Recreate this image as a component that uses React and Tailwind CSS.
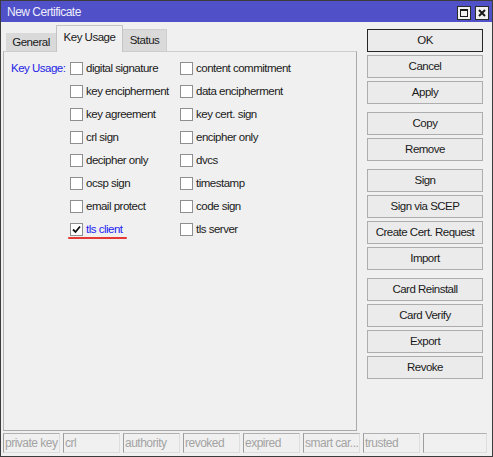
import React from 'react'

const col1 = ['digital signature', 'key encipherment', 'key agreement', 'crl sign', 'decipher only', 'ocsp sign', 'email protect', 'tls client']
const col2 = ['content commitment', 'data encipherment', 'key cert. sign', 'encipher only', 'dvcs', 'timestamp', 'code sign', 'tls server']

const groups = [
  ['OK', 'Cancel', 'Apply'],
  ['Copy', 'Remove'],
  ['Sign', 'Sign via SCEP', 'Create Cert. Request', 'Import'],
  ['Card Reinstall', 'Card Verify', 'Export', 'Revoke'],
]

const status = [
  ['private key', 'w-[57px]'],
  ['crl', 'w-[57px]'],
  ['authority', 'w-[57px]'],
  ['revoked', 'w-[57px]'],
  ['expired', 'w-[57px]'],
  ['smart car...', 'w-[57px]'],
  ['trusted', 'w-[57px]'],
  ['', 'w-[64px]'],
]

const CheckBox = ({ label, checked }) => (
  <div className="h-[23px] flex items-center relative">
    <span className="w-[13px] h-[13px] bg-white border border-[#8f8f8f] flex items-center justify-center shrink-0">
      {checked && (
        <svg width="9" height="9" viewBox="0 0 9 9">
          <path d="M1 4.5 L3.5 7 L8 1.5" fill="none" stroke="#111" strokeWidth="1.8" />
        </svg>
      )}
    </span>
    <span className={`ml-[3px] whitespace-nowrap ${checked ? 'text-[#1c1cf0]' : 'text-[#1a1a1a]'}`}>{label}</span>
    {checked && (
      <span className="absolute left-[-2px] top-[19px] w-[59px] h-[2px] rounded-full bg-[#e53935]" />
    )}
  </div>
)

export default function App() {
  return (
    <div
      className="w-[493px] h-[457px] bg-[#f0f0f0] border border-[#3c3c3c] flex flex-col text-[11.5px] tracking-[-0.5px] text-[#1a1a1a]"
      style={{ fontFamily: '"Liberation Sans", Arial, sans-serif' }}
    >
      {/* title bar */}
      <div className="h-[21px] bg-[#5050c9] flex items-center justify-between pl-[6px] pr-[3px] shrink-0">
        <span className="text-[#eeeefa] text-[12px] tracking-[-0.5px]">New Certificate</span>
        <div className="flex gap-[4px] mt-[2px]">
          <span className="w-[14px] h-[14px] bg-[#f0f0f0] border border-[#2a2a2a] flex items-center justify-center">
            <span className="w-[8px] h-[8px] border border-[#1a1a1a] border-t-2" />
          </span>
          <span className="w-[14px] h-[14px] bg-[#f0f0f0] border border-[#2a2a2a] flex items-center justify-center">
            <svg width="8" height="8" viewBox="0 0 8 8">
              <path d="M1 1 L7 7 M7 1 L1 7" stroke="#1a1a1a" strokeWidth="2" />
            </svg>
          </span>
        </div>
      </div>

      <div className="flex flex-1 min-h-0">
        {/* left side */}
        <div className="ml-[2px] w-[354px] flex flex-col pt-[3px]">
          <div className="h-[26px] flex items-end pl-[3px] relative z-10">
            <div className="h-[18px] w-[50px] bg-[#d9d9d9] flex items-center justify-center pt-[1px]">General</div>
            <div className="h-[27px] w-[67px] bg-[#f0f0f0] border border-b-0 border-[#c4c4c4] flex items-center justify-center -mb-[1px] pb-[2px]">Key Usage</div>
            <div className="h-[22px] w-[44px] bg-[#dadada] border-t border-r border-[#cfcfcf] flex items-center justify-center pt-[1px]">Status</div>
          </div>
          <div className="flex-1 border border-[#a9a9a9] border-t-[#cdcdcd] border-l-[#b4b4b4] pt-[5px] pl-[7px] flex">
            <div className="w-[59px] h-[23px] flex items-center text-[#2424e6]">Key Usage:</div>
            <div className="w-[110px]">
              {col1.map((l) => (
                <CheckBox key={l} label={l} checked={l === 'tls client'} />
              ))}
            </div>
            <div>
              {col2.map((l) => (
                <CheckBox key={l} label={l} />
              ))}
            </div>
          </div>
        </div>

        {/* right buttons */}
        <div className="ml-[10px] w-[116px] pt-[7px] flex flex-col gap-[8px]">
          {groups.map((g, gi) => (
            <div key={gi} className="flex flex-col gap-[3px]">
              {g.map((b) => (
                <button
                  key={b}
                  className={`h-[23px] w-full bg-[#ebebeb] border flex items-center justify-center ${b === 'OK' ? 'border-[#262626]' : 'border-[#adadad]'}`}
                >
                  {b}
                </button>
              ))}
            </div>
          ))}
        </div>
      </div>

      {/* status bar */}
      <div className="h-[20px] mt-[2px] mb-[3px] ml-[2px] flex gap-[3px] shrink-0">
        {status.map(([t, w], i) => (
          <div
            key={i}
            className={`${w} h-full border border-l-[#9d9d9d] border-t-[#b0b0b0] border-r-[#dedede] border-b-[#dedede] text-[#a3a3a3] text-[12px] flex items-center pl-[1px] whitespace-nowrap overflow-hidden`}
          >
            {t}
          </div>
        ))}
      </div>
    </div>
  )
}
